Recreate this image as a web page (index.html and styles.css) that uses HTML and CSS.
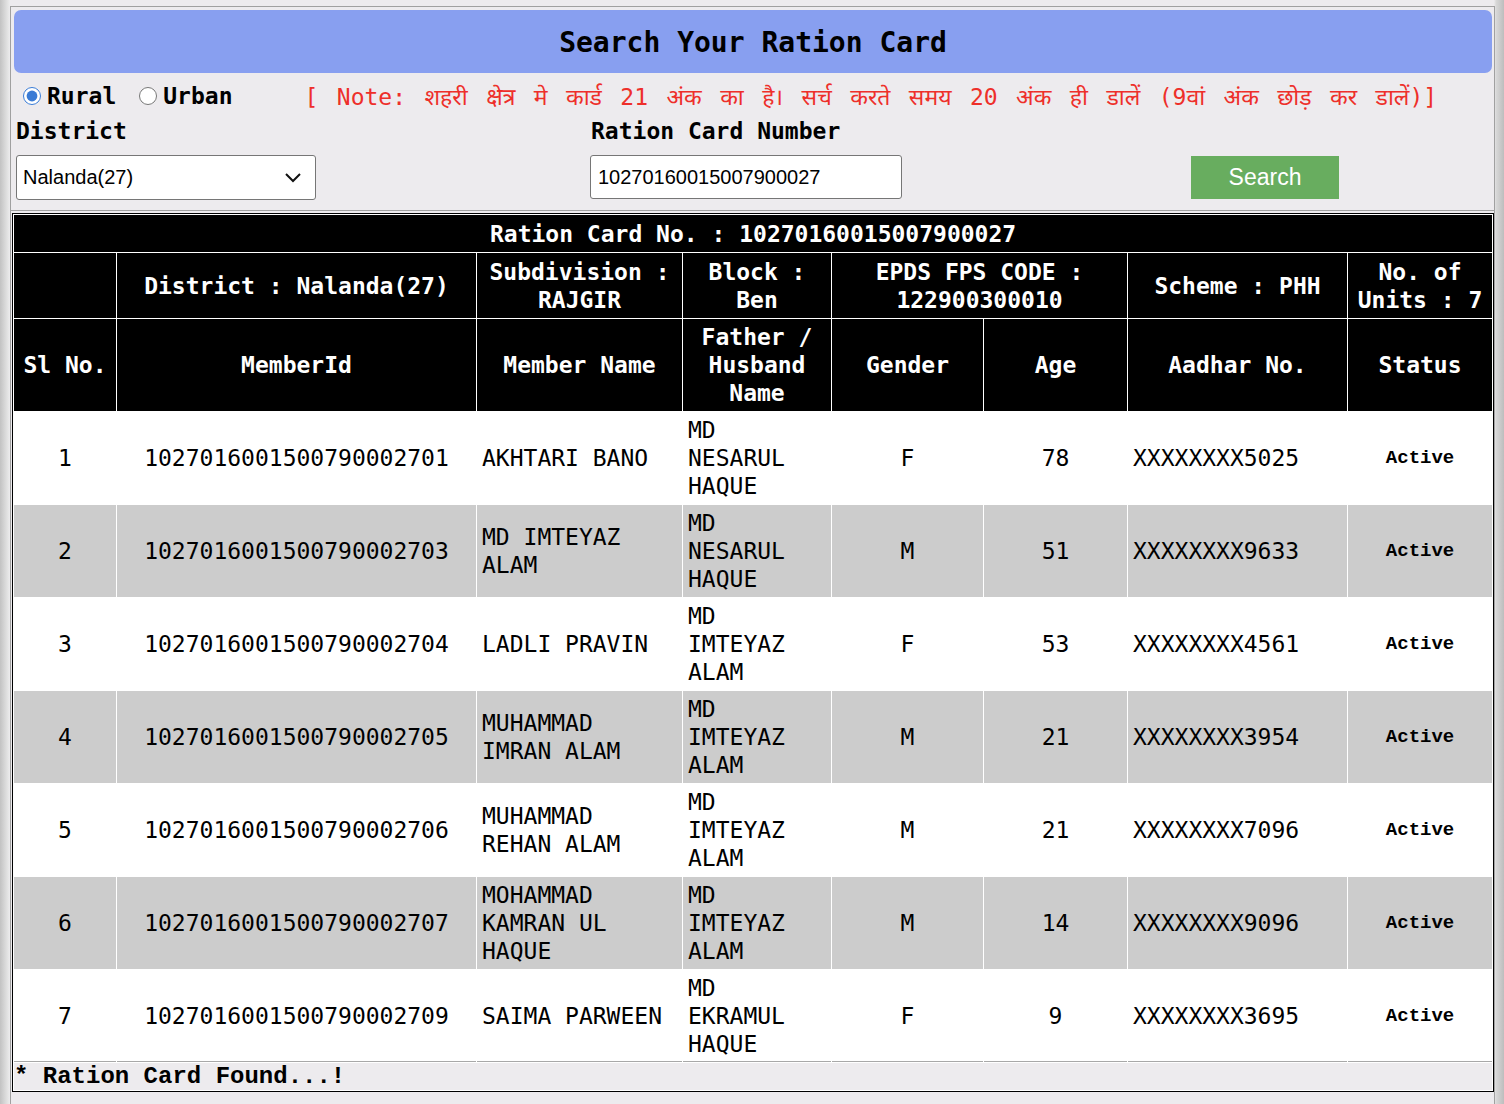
FILE: index.html
```html
<!DOCTYPE html>
<html lang="en">
<head>
<meta charset="utf-8">
<title>Search Your Ration Card</title>
<link rel="stylesheet" href="styles.css">
</head>
<body>
<div class="page">
  <div class="form">
    <div class="title">Search Your Ration Card</div>
    <div class="typerow">
      <label class="radio first"><input type="radio" name="area" checked>Rural</label>
      <label class="radio second"><input type="radio" name="area">Urban</label>
      <span class="note">[ Note: शहरी क्षेत्र मे कार्ड 21 अंक का है। सर्च करते समय 20 अंक ही डालें (9वां अंक छोड़ कर डालें)]</span>
    </div>
    <div class="fields">
      <div class="lbl">District</div>
      <div class="lbl lbl2">Ration Card Number</div>
      <div></div>
      <div class="selectbox">
        <span>Nalanda(27)</span>
        <svg class="chev" width="18" height="12" viewBox="0 0 18 12"><path d="M2 2 L9 9 L16 2" fill="none" stroke="#111" stroke-width="2"/></svg>
      </div>
      <div class="inputbox">10270160015007900027</div>
      <div class="btnwrap"><button class="btn">Search</button></div>
    </div>
  </div>
  <table class="cards">
    <colgroup>
      <col class="c1"><col class="c2"><col class="c3"><col class="c4"><col class="c5"><col class="c6"><col class="c7"><col class="c8">
    </colgroup>
    <thead>
      <tr class="h1"><th colspan="8">Ration Card No. : 10270160015007900027</th></tr>
      <tr class="h2">
        <th></th>
        <th>District : Nalanda(27)</th>
        <th>Subdivision : RAJGIR</th>
        <th>Block : Ben</th>
        <th colspan="2">EPDS FPS CODE : 122900300010</th>
        <th>Scheme : PHH</th>
        <th>No. of Units : 7</th>
      </tr>
      <tr class="h3">
        <th>Sl No.</th>
        <th>MemberId</th>
        <th>Member Name</th>
        <th>Father / Husband Name</th>
        <th>Gender</th>
        <th>Age</th>
        <th>Aadhar No.</th>
        <th>Status</th>
      </tr>
    </thead>
    <tbody>
      <tr>
        <td class="ctr">1</td><td class="ctr">1027016001500790002701</td><td class="lft">AKHTARI BANO</td><td class="lft">MD NESARUL HAQUE</td><td class="ctr">F</td><td class="ctr">78</td><td class="lft">XXXXXXXX5025</td><td class="st">Active</td>
      </tr>
      <tr class="alt">
        <td class="ctr">2</td><td class="ctr">1027016001500790002703</td><td class="lft">MD IMTEYAZ ALAM</td><td class="lft">MD NESARUL HAQUE</td><td class="ctr">M</td><td class="ctr">51</td><td class="lft">XXXXXXXX9633</td><td class="st">Active</td>
      </tr>
      <tr>
        <td class="ctr">3</td><td class="ctr">1027016001500790002704</td><td class="lft">LADLI PRAVIN</td><td class="lft">MD IMTEYAZ ALAM</td><td class="ctr">F</td><td class="ctr">53</td><td class="lft">XXXXXXXX4561</td><td class="st">Active</td>
      </tr>
      <tr class="alt">
        <td class="ctr">4</td><td class="ctr">1027016001500790002705</td><td class="lft">MUHAMMAD IMRAN ALAM</td><td class="lft">MD IMTEYAZ ALAM</td><td class="ctr">M</td><td class="ctr">21</td><td class="lft">XXXXXXXX3954</td><td class="st">Active</td>
      </tr>
      <tr>
        <td class="ctr">5</td><td class="ctr">1027016001500790002706</td><td class="lft">MUHAMMAD REHAN ALAM</td><td class="lft">MD IMTEYAZ ALAM</td><td class="ctr">M</td><td class="ctr">21</td><td class="lft">XXXXXXXX7096</td><td class="st">Active</td>
      </tr>
      <tr class="alt">
        <td class="ctr">6</td><td class="ctr">1027016001500790002707</td><td class="lft">MOHAMMAD KAMRAN UL HAQUE</td><td class="lft">MD IMTEYAZ ALAM</td><td class="ctr">M</td><td class="ctr">14</td><td class="lft">XXXXXXXX9096</td><td class="st">Active</td>
      </tr>
      <tr class="last">
        <td class="ctr">7</td><td class="ctr">1027016001500790002709</td><td class="lft">SAIMA PARWEEN</td><td class="lft">MD EKRAMUL HAQUE</td><td class="ctr">F</td><td class="ctr">9</td><td class="lft">XXXXXXXX3695</td><td class="st">Active</td>
      </tr>
      <tr class="foot"><td colspan="8">* Ration Card Found...!</td></tr>
    </tbody>
  </table>
</div>
</body>
</html>
```
FILE: styles.css
```css
html, body {
  margin: 0;
  padding: 0;
}
body {
  background: linear-gradient(to right, #c2c2c2 0, #e9e9e9 9px, #edebee 10px, #edebee 1494px, #d8d8d8 1496px, #bdbdbd 1504px);
  min-height: 1104px;
  font-family: "DejaVu Sans Mono", "Liberation Mono", monospace;
  color: #000;
}
.page {
  margin: 6px 9px 0 10px;
  border: 1px solid #a0a0a0;
  border-bottom: none;
  min-height: 1097px;
}
.form {
  border-bottom: 1px solid #a0a0a0;
  padding-bottom: 10px;
}
.title {
  margin: 3px 2px 0 3px;
  height: 63px;
  padding-top: 1px;
  box-sizing: border-box;
  background: #889ff0;
  border-radius: 7px;
  display: flex;
  align-items: center;
  justify-content: center;
  font-weight: bold;
  font-size: 28px;
}
.typerow {
  height: 45px;
  padding-top: 1px;
  box-sizing: border-box;
  display: flex;
  align-items: center;
  font-size: 23px;
  white-space: nowrap;
}
.radio {
  display: flex;
  align-items: center;
  font-weight: bold;
}
.radio input {
  width: 18px;
  height: 18px;
  margin: 0 6px 0 0;
  accent-color: #3a7bd5;
}
.radio.first { margin-left: 12px; }
.radio.second { margin-left: 23px; }
.note {
  margin-left: 72px;
  color: #ee2f2a;
  font-size: 23px;
  word-spacing: 4.6px;
  font-family: "DejaVu Sans Mono", "Noto Sans", sans-serif;
}
.fields {
  display: grid;
  grid-template-columns: 574px 601px 1fr;
  grid-template-rows: 26px 45px;
  row-gap: 11px;
  padding-left: 5px;
}
.lbl {
  font-weight: bold;
  font-size: 23px;
  line-height: 26px;
}
.lbl2 { padding-left: 1px; }
.selectbox {
  width: 300px;
  height: 45px;
  box-sizing: border-box;
  border: 1px solid #767676;
  border-radius: 3px;
  background: #fff;
  display: flex;
  align-items: center;
  justify-content: space-between;
  padding: 0 13px 0 6px;
  font-family: "Liberation Sans", Arial, sans-serif;
  font-size: 20px;
}
.chev { display: block; }
.inputbox {
  width: 312px;
  height: 44px;
  box-sizing: border-box;
  border: 1px solid #767676;
  border-radius: 3px;
  background: #fff;
  display: flex;
  align-items: center;
  padding-left: 7px;
  font-family: "Liberation Sans", Arial, sans-serif;
  font-size: 20px;
}
.btnwrap {
  padding-top: 1px;
}
.btn {
  width: 148px;
  height: 43px;
  border: none;
  background: #68ad5f;
  color: #fff;
  font-family: "Liberation Sans", Arial, sans-serif;
  font-size: 23px;
  padding: 0;
}
.cards {
  margin: 2px 0 0 1px;
  width: 1482px;
  table-layout: fixed;
  border: 1px solid #000;
  border-spacing: 1px;
  background: #fff;
  font-size: 23px;
  line-height: 28px;
}
.c1 { width: 102px; }
.c2 { width: 359px; }
.c3 { width: 205px; }
.c4 { width: 148px; }
.c5 { width: 151px; }
.c6 { width: 143px; }
.c7 { width: 219px; }
.c8 { width: 144px; }
.cards th {
  background: #000;
  color: #fff;
  font-weight: bold;
  text-align: center;
  vertical-align: middle;
  padding: 0 4px;
}
.h1 th { height: 37px; }
.h2 th { height: 65px; }
.h3 th { height: 92px; }
.cards td {
  height: 92px;
  padding: 0 5px;
  vertical-align: middle;
  background: #fff;
}
.cards tr.alt td { background: #cccccc; }
.ctr { text-align: center; }
.cards td.lft { text-align: left; padding-right: 8px; }
.st {
  text-align: center;
  font-family: "Liberation Mono", "Courier New", monospace;
  font-weight: bold;
  font-size: 19px;
}
.cards tr.last td {
  height: 91px;
  border-bottom: 1px solid #a8a8a8;
}
.cards tr.foot td {
  height: 27px;
  padding: 0;
  background: #edebee;
  font-family: "Liberation Mono", "Courier New", monospace;
  font-weight: bold;
  font-size: 24px;
  line-height: 27px;
}
```
